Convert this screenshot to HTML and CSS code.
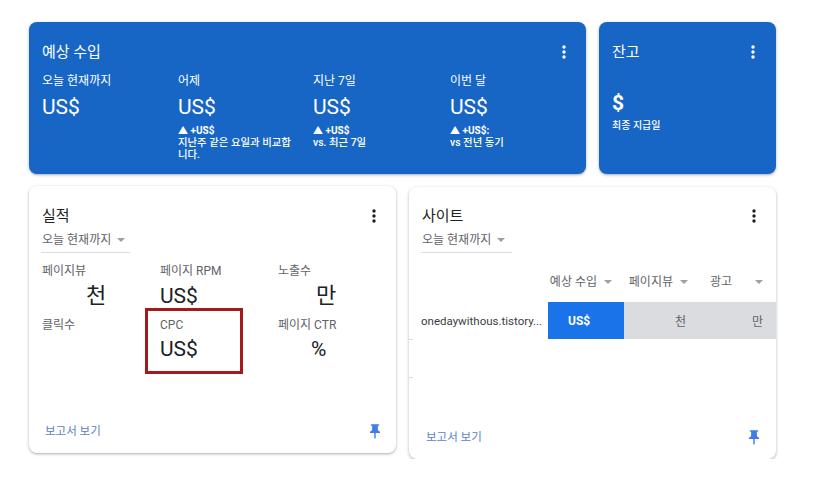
FILE: index.html
```html
<!DOCTYPE html>
<html lang="ko">
<head>
<meta charset="utf-8">
<link rel="stylesheet" href="styles.css">
</head>
<body>
<div class="page">
  <div class="row top-row">
    <section class="card blue earnings">
      <div class="card-head">
        <h2 class="title">예상 수입</h2>
        <svg class="kebab" viewBox="0 0 4 14" width="4" height="14"><circle cx="2" cy="2" r="1.7"/><circle cx="2" cy="7" r="1.7"/><circle cx="2" cy="12" r="1.7"/></svg>
      </div>
      <div class="earn-grid">
        <div class="earn-col">
          <div class="earn-label">오늘 현재까지</div>
          <div class="earn-value">US$</div>
        </div>
        <div class="earn-col">
          <div class="earn-label">어제</div>
          <div class="earn-value">US$</div>
          <div class="earn-delta">▲ +US$</div>
          <div class="earn-note">지난주 같은 요일과 비교합<br>니다.</div>
        </div>
        <div class="earn-col">
          <div class="earn-label">지난 7일</div>
          <div class="earn-value">US$</div>
          <div class="earn-delta">▲ +US$</div>
          <div class="earn-note">vs. 최근 7일</div>
        </div>
        <div class="earn-col">
          <div class="earn-label">이번 달</div>
          <div class="earn-value">US$</div>
          <div class="earn-delta">▲ +US$:</div>
          <div class="earn-note">vs 전년 동기</div>
        </div>
      </div>
    </section>
    <section class="card blue balance">
      <div class="card-head">
        <h2 class="title">잔고</h2>
        <svg class="kebab" viewBox="0 0 4 14" width="4" height="14"><circle cx="2" cy="2" r="1.7"/><circle cx="2" cy="7" r="1.7"/><circle cx="2" cy="12" r="1.7"/></svg>
      </div>
      <div class="bal-value">$</div>
      <div class="bal-note">최종 지급일</div>
    </section>
  </div>

  <div class="row bottom-row">
    <section class="card white perf">
      <div class="card-head">
        <h2 class="title dark">실적</h2>
        <svg class="kebab dark" viewBox="0 0 4 14" width="4" height="14"><circle cx="2" cy="2" r="1.7"/><circle cx="2" cy="7" r="1.7"/><circle cx="2" cy="12" r="1.7"/></svg>
      </div>
      <div class="dropdown"><span>오늘 현재까지</span><span class="caret"></span></div>
      <div class="metrics">
        <div class="metric">
          <div class="m-label">페이지뷰</div>
          <div class="m-value m-pv">천</div>
        </div>
        <div class="metric">
          <div class="m-label">페이지 RPM</div>
          <div class="m-value">US$</div>
        </div>
        <div class="metric">
          <div class="m-label">노출수</div>
          <div class="m-value m-imp">만</div>
        </div>
        <div class="metric">
          <div class="m-label">클릭수</div>
          <div class="m-value">&nbsp;</div>
        </div>
        <div class="metric">
          <div class="m-label">CPC</div>
          <div class="m-value">US$</div>
        </div>
        <div class="metric">
          <div class="m-label">페이지 CTR</div>
          <div class="m-value m-ctr">%</div>
        </div>
      </div>
      <div class="highlight"></div>
      <div class="card-foot">
        <span class="report-link">보고서 보기</span>
        <svg class="pin" viewBox="5 2 14 20" width="10" height="15"><path d="M16 9V4h1c.55 0 1-.45 1-1s-.45-1-1-1H7c-.55 0-1 .45-1 1s.45 1 1 1h1v5c0 1.66-1.34 3-3 3v2h5.970v7l1 1 1-1v-7H19v-2c-1.66 0-3-1.340-3-3z"/></svg>
      </div>
    </section>

    <section class="card white sites">
      <div class="sites-head">
        <div class="card-head">
          <h2 class="title dark">사이트</h2>
          <svg class="kebab dark" viewBox="0 0 4 14" width="4" height="14"><circle cx="2" cy="2" r="1.7"/><circle cx="2" cy="7" r="1.7"/><circle cx="2" cy="12" r="1.7"/></svg>
        </div>
        <div class="dropdown wide"><span>오늘 현재까지</span><span class="caret"></span></div>
      </div>
      <div class="table">
        <div class="t-row t-header">
          <div class="t-cell"></div>
          <div class="t-cell th">예상 수입<span class="caret"></span></div>
          <div class="t-cell th">페이지뷰<span class="caret"></span></div>
          <div class="t-cell th th-ads">광고<span class="caret"></span></div>
        </div>
        <div class="t-row t-data">
          <div class="t-cell t-name">onedaywithous.tistory...</div>
          <div class="t-cell t-earn">US$</div>
          <div class="t-cell t-gray t-pv">천</div>
          <div class="t-cell t-gray t-ads">만</div>
        </div>
        <div class="t-row t-empty"></div>
      </div>
      <div class="card-foot sites-foot">
        <span class="report-link">보고서 보기</span>
        <svg class="pin" viewBox="5 2 14 20" width="10" height="15"><path d="M16 9V4h1c.55 0 1-.45 1-1s-.45-1-1-1H7c-.55 0-1 .45-1 1s.45 1 1 1h1v5c0 1.66-1.34 3-3 3v2h5.970v7l1 1 1-1v-7H19v-2c-1.66 0-3-1.340-3-3z"/></svg>
      </div>
    </section>
  </div>
</div>
</body>
</html>
```

FILE: styles.css
```css
* { box-sizing: border-box; }
html, body { margin: 0; padding: 0; background: #fff; }
body {
  font-family: Roboto, "Noto Sans CJK KR", sans-serif;
  color: #202124;
}
.page { padding: 22px 0 0 29px; width: 814px; }
.row { display: flex; gap: 13px; align-items: flex-start; }
.bottom-row { margin-top: 12px; }

.card {
  border-radius: 8px;
  box-shadow: 0 1px 2px rgba(60,64,67,.28), 0 1px 3px 1px rgba(60,64,67,.12);
  position: relative;
}
.blue { background: #1766c6; color: #fff; }
.white { background: #fff; }

.card-head { display: flex; justify-content: space-between; align-items: center; }
.title { margin: 0; font-size: 15px; font-weight: 400; line-height: 24px; }
.kebab { fill: #fff; margin-right: 7px; }
.kebab.dark { fill: #202124; }

/* earnings */
.earnings { width: 557px; height: 152px; padding: 18px 13px 0 13px; }
.earn-grid { display: grid; grid-template-columns: 136px 135px 137px 1fr; margin-top: 9px; }
.earn-label { font-size: 12px; line-height: 16px; }
.earn-value { font-size: 21px; line-height: 26px; margin-top: 5px; }
.earn-delta { font-size: 10px; line-height: 12px; margin-top: 5px; font-weight: 700; }
.earn-note { font-size: 10.4px; line-height: 12px; font-weight: 500; white-space: nowrap; }

/* balance */
.balance { width: 177px; height: 152px; padding: 18px 13px 0 13px; }
.balance .kebab { margin-right: 8px; }
.bal-value { font-size: 21px; font-weight: 700; line-height: 26px; margin-top: 26px; }
.bal-note { font-size: 10px; line-height: 14px; margin-top: 3px; font-weight: 500; }

/* dropdown */
.dropdown {
  display: flex; align-items: center; gap: 6px;
  width: 89px; margin: 4px 0 0 -1px; padding: 0 0 4px 1px;
  border-bottom: 1px solid #dadce0;
  font-size: 12px; line-height: 16px; color: #5f6368;
}
.dropdown.wide { width: 91px; }
.caret {
  display: inline-block; width: 0; height: 0;
  border-left: 4px solid transparent; border-right: 4px solid transparent;
  border-top: 4px solid #9aa0a6;
}

/* performance */
.perf { width: 367px; height: 267px; padding: 18px 0 0 13px; display: flex; flex-direction: column; }
.perf .card-head { padding-right: 13px; }
.metrics { display: grid; grid-template-columns: 118px 118px 118px; margin-top: 10px; row-gap: 8px; }
.m-label { font-size: 12px; line-height: 16px; color: #5f6368; }
.m-value { font-size: 21px; line-height: 26px; margin-top: 4px; color: #202124; }
.metric:nth-child(n+4) .m-value { margin-top: 3px; }
.m-pv { padding-left: 44px; font-size: 22px; }
.m-imp { padding-left: 38px; font-size: 22px; }
.m-ctr { padding-left: 33px; }

.highlight {
  position: absolute; left: 116px; top: 122px; width: 98px; height: 66px;
  border: 3px solid #a3191c;
}

.card-foot {
  margin-top: auto; display: flex; justify-content: space-between; align-items: center;
  padding: 0 16px 14px 3px; height: 30px;
}
.report-link { font-size: 11.5px; line-height: 16px; color: #5b7fc5; }
.pin { fill: #3f7ee8; }

/* sites */
.sites { width: 367px; height: 272px; margin-top: 1px; display: flex; flex-direction: column; }
.sites-head { padding: 17px 20px 0 13px; }
.sites-head .kebab { margin-right: 0; }
.table { margin-top: 21px; }
.t-row { display: grid; grid-template-columns: 139px 76px 76px 76px; position: relative; }
.t-header { height: 16px; }
.th {
  display: flex; justify-content: flex-end; align-items: center; gap: 7px;
  font-size: 12px; line-height: 16px; color: #5f6368; padding-right: 12px;
}
.th-ads { gap: 23px; padding-right: 13px; }
.t-data { margin-top: 12px; height: 37px; }
.t-cell { font-size: 12px; }
.t-name {
  padding-left: 12px; display: flex; align-items: center;
  color: #3c4043; font-size: 11.5px; white-space: nowrap;
}
.t-earn {
  background: #1a73e8; color: #fff; font-weight: 700; display: flex; align-items: center;
  padding-left: 20px; font-size: 12px;
}
.t-gray { background: #dadce0; display: flex; align-items: center; justify-content: flex-end; color: #5f6368; }
.t-pv { padding-right: 14px; }
.t-ads { padding-right: 13px; }
.t-empty { height: 38px; }
.t-data::after, .t-empty::after {
  content: ""; position: absolute; left: 0; bottom: -1px; width: 4px; height: 1px; background: #dadce0;
}
.sites-foot { padding: 0 17px 14px 17px; }
```
